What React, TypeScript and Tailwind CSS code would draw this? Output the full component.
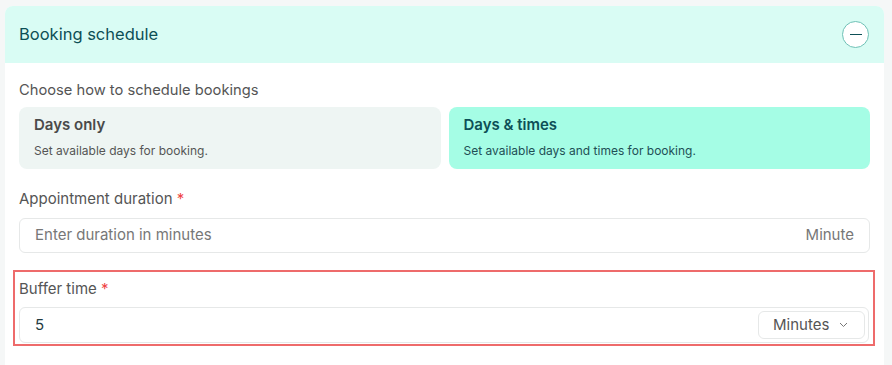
import React from "react";

export default function App() {
  return (
    <div className="w-[892px] h-[365px] bg-[#f5f7f7] overflow-hidden pl-[5px] pr-[8px] pt-[6px]" style={{ fontFamily: "Inter, 'Noto Sans', sans-serif" }}>
      <div className="bg-white rounded-t-[8px] h-full">
        <div className="h-[57px] bg-[#d9fcf4] rounded-t-[8px] flex items-center justify-between pl-[14px] pr-[15px]">
          <span className="text-[16.5px] text-[#0d4f56]">Booking schedule</span>
          <button className="w-[27px] h-[27px] rounded-full border-[1.5px] border-[#6ec1b6] bg-white flex items-center justify-center">
            <span className="block w-[12px] h-[1.5px] bg-[#0d4f56]" />
          </button>
        </div>
        <div className="px-[14px] pt-[17px]">
          <div className="text-[14.7px] text-[#555] leading-[20px]">Choose how to schedule bookings</div>
          <div className="grid grid-cols-2 gap-[8px] mt-[7px]">
            <div className="h-[62px] rounded-[8px] bg-[#eef5f3] px-[15px] pt-[8px]">
              <div className="text-[15px] font-semibold text-[#4a4a4a] leading-[20px]">Days only</div>
              <div className="text-[12px] text-[#555] mt-[8px] leading-[16px]">Set available days for booking.</div>
            </div>
            <div className="h-[62px] rounded-[8px] bg-[#a5fde5] px-[15px] pt-[8px]">
              <div className="text-[15px] font-semibold text-[#0d4f56] leading-[20px]">Days &amp; times</div>
              <div className="text-[12px] text-[#1f4f55] mt-[8px] leading-[16px]">Set available days and times for booking.</div>
            </div>
          </div>
          <div className="mt-[20px] text-[15px] text-[#555] leading-[20px]">
            Appointment duration <span className="text-[#ef4444]">*</span>
          </div>
          <div className="mt-[9px] h-[35px] rounded-[6px] border border-[#e6e8e8] flex items-center justify-between px-[15px]">
            <span className="text-[15px] text-[#777]">Enter duration in minutes</span>
            <span className="text-[15px] text-[#777]">Minute</span>
          </div>
          <div className="mt-[17px] -ml-[6px] -mr-[5px] border-2 border-[#ee6b6b] px-[4px] pt-[7px] pb-[1px]">
            <div className="text-[15px] text-[#555] leading-[20px]">
              Buffer time <span className="text-[#ef4444]">*</span>
            </div>
            <div className="mt-[8px] h-[36px] rounded-[6px] border border-[#e6e8e8] flex items-center justify-between pl-[15px] pr-[3px]">
              <span className="text-[15px] text-[#1f3b3f]">5</span>
              <div className="h-[28px] w-[107px] rounded-[6px] border border-[#e6e8e8] flex items-center pl-[14px] gap-[10px]">
                <span className="text-[15px] text-[#555]">Minutes</span>
                <svg width="9" height="6" viewBox="0 0 9 6" fill="none"><path d="M1 1l3.5 3.5L8 1" stroke="#777" strokeWidth="1" /></svg>
              </div>
            </div>
          </div>
        </div>
      </div>
    </div>
  );
}
